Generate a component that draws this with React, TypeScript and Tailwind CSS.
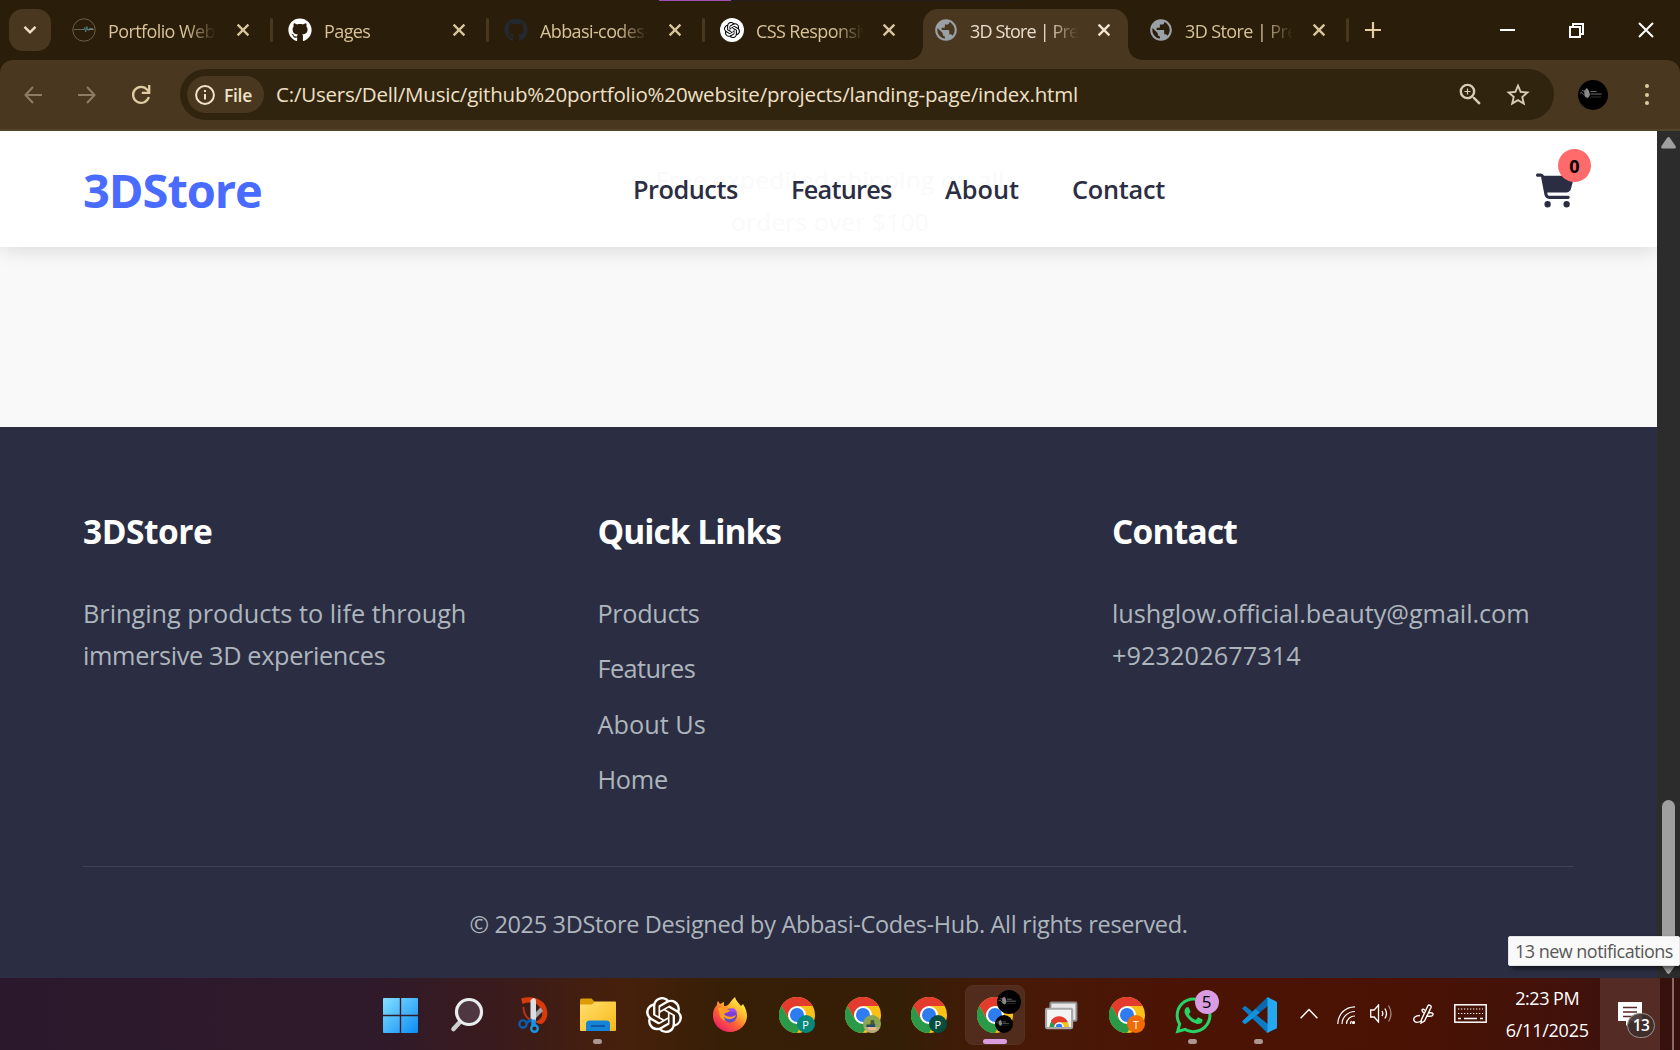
import type { ReactNode } from "react";
import { FaGithub, FaWhatsapp } from "react-icons/fa";
import { FaCartShopping } from "react-icons/fa6";
import { MdPublic, MdStarBorder, MdZoomIn } from "react-icons/md";
import { SiOpenai } from "react-icons/si";

/* ---------- Browser chrome ---------- */

function CloseGlyph() {
  return (
    <svg viewBox="0 0 14 14" className="size-[14px] shrink-0" fill="none" stroke="currentColor" strokeWidth="2.3">
      <path d="M1.6 1.6 12.4 12.4M12.4 1.6 1.6 12.4" />
    </svg>
  );
}

function PortfolioIcon() {
  return (
    <svg viewBox="0 0 24 24" className="size-6" fill="none">
      <circle cx="12" cy="12" r="11.2" stroke="#6b6047" strokeWidth="1" />
      <path d="M2 11.500h9M15 11.500h7" stroke="#5f6455" strokeWidth="1" />
      <path d="M10 11.500h2l.8-2 .8 4.500 1.200-5.500.8 3.500h2" stroke="#4f7f7b" strokeWidth="1" />
      <path d="M17 11h4" stroke="#7a9a94" strokeWidth="1.200" />
    </svg>
  );
}

function Tab({ icon, title, active, divider, className }: { icon: ReactNode; title: string; active?: boolean; divider?: boolean; className: string }) {
  return (
    <div className={`relative flex h-[60px] shrink-0 items-center ${className}`}>
      {active && (
        <div className="absolute left-[3px] right-[5px] top-[9px] bottom-0 rounded-t-[15px] bg-[#49381f]">
          <div className="absolute bottom-0 -left-[14px] size-[14px] bg-[radial-gradient(circle_at_0_0,transparent_13.5px,#49381f_14px)]" />
          <div className="absolute bottom-0 -right-[14px] size-[14px] bg-[radial-gradient(circle_at_100%_0,transparent_13.5px,#49381f_14px)]" />
        </div>
      )}
      <div className="relative flex size-6 shrink-0 items-center justify-center">{icon}</div>
      <div className={`relative ml-3 w-[111px] overflow-hidden whitespace-nowrap pt-[2px] text-[18px] leading-[26px] [mask-image:linear-gradient(to_right,#000_78px,transparent_108px)] ${active ? "tracking-[-0.85px] text-[#eadfcd]" : "tracking-[-0.6px] text-[#d8c29a]"}`}>
        {title}
      </div>
      <div className={`relative ml-auto mr-[22px] flex ${active ? "text-[#f2e6d2]" : "text-[#d9c69d]"}`}>
        <CloseGlyph />
      </div>
      {divider && <div className="absolute top-[18px] -right-px h-6 w-[3px] rounded-full bg-[#49381f]" />}
    </div>
  );
}

const globe = <MdPublic className="size-[26px] shrink-0 text-[#9aa0a6]" />;

function TabStrip() {
  return (
    <div className="relative flex h-[60px] bg-[#2a1d09]">
      <div className="absolute left-[659px] top-0 h-px w-[72px] bg-[#a04db6]" />
      <div className="absolute left-[731px] top-0 h-px w-[289px] bg-[#221c1a]" />
      <div className="mt-[9px] ml-[9px] mr-[5px] flex size-[42px] shrink-0 items-center justify-center rounded-[14px] bg-[#49381f]">
        <svg viewBox="0 0 14 10" className="h-[10px] w-[14px]" fill="none" stroke="#f0dfc4" strokeWidth="2.4">
          <path d="M1.5 1.8 7 7.4l5.500-5.600" />
        </svg>
      </div>
      <Tab className="w-[216px] pl-4" divider icon={<PortfolioIcon />} title="Portfolio Website" />
      <Tab className="w-[216px] pl-4" divider icon={<FaGithub className="size-6 text-white" />} title="Pages" />
      <Tab className="w-[216px] pl-4" divider icon={<FaGithub className="size-6 text-[#24292f]" />} title="Abbasi-codes-hub" />
      <Tab
        className="w-[214px] pl-4"
        icon={<span className="flex size-6 items-center justify-center rounded-full bg-white"><SiOpenai className="size-4 text-black" /></span>}
        title="CSS Responsive"
      />
      <Tab className="ml-[2px] w-[213px] pl-[14px]" active icon={globe} title="3D Store | Premium" />
      <Tab className="w-[215px] pl-4" divider icon={globe} title="3D Store | Premium" />
      <svg viewBox="0 0 16 16" className="mt-[22px] ml-[17px] size-4" stroke="#e6cda3" strokeWidth="2.2">
        <path d="M8 0v16M0 8h16" />
      </svg>
      <div className="ml-auto flex items-center gap-[54px] pr-[26px] text-white">
        <div className="h-[2px] w-[15px] bg-white" />
        <svg viewBox="0 0 15 15" className="size-[15px]" fill="none" stroke="currentColor" strokeWidth="2">
          <path d="M1 4h10v10H1zM4 4V1h10v10h-3" />
        </svg>
        <svg viewBox="0 0 16 16" className="size-4" stroke="currentColor" strokeWidth="2">
          <path d="M1 1l14 14M15 1 1 15" />
        </svg>
      </div>
    </div>
  );
}

function AvatarArt({ className }: { className: string }) {
  return (
    <svg viewBox="0 0 30 30" className={className} fill="none">
      <circle cx="15" cy="15" r="15" fill="#000" />
      <path d="M6 11l3-3 2 3 1 4-2 3-3-1z" fill="#8b8b8b" />
      <path d="M2 13c3-1 4 2 6 4M4 10c2 2 3 1 5 1" stroke="#777" strokeWidth="1" />
      <path d="M12.500 11.500h6M12.500 14h11" stroke="#6f6f6f" strokeWidth="1.200" />
      <path d="M12.500 17h11" stroke="#444" strokeWidth=".7" />
    </svg>
  );
}

function Toolbar() {
  return (
    <div className="bg-[#2a1d09]">
      <div className="flex h-[71px] items-center rounded-t-[13px] border-b-2 border-[#54442a] bg-[#49381f]">
        <svg viewBox="0 0 18 18" className="ml-6 size-[18px]" fill="none" stroke="#8e7d64" strokeWidth="2">
          <path d="M18 9H1.500M9 1 1.500 9 9 17" />
        </svg>
        <svg viewBox="0 0 18 18" className="ml-9 size-[18px]" fill="none" stroke="#8e7d64" strokeWidth="2">
          <path d="M0 9h16.500M9 1l7.500 8L9 17" />
        </svg>
        <svg viewBox="0 0 20 20" className="ml-[35px] size-5" fill="none" stroke="#dfcaa2" strokeWidth="2.300">
          <path d="M17.800 12A8 8 0 1 1 16.300 4.800L18 6.800" />
          <path d="M18.200 0v7.800h-7.400" />
        </svg>
        <div className="ml-[29px] flex h-[51px] w-[1374px] shrink-0 items-center rounded-full bg-[#31240f]">
          <div className="ml-[7px] flex h-[37px] w-[77px] shrink-0 items-center rounded-full bg-[#49381f] pl-2 text-[#f1e2c9]">
            <svg viewBox="0 0 20 20" className="size-5" fill="none" stroke="currentColor" strokeWidth="2">
              <circle cx="10" cy="10" r="8.900" />
              <path d="M10 9v5.600M10 5v2" />
            </svg>
            <span className="ml-[9px] text-[17.500px] font-semibold leading-[24px] tracking-[-0.3px]">File</span>
          </div>
          <span className="ml-[12px] pb-[2px] text-[20.500px] leading-[30px] tracking-[-0.205px] whitespace-nowrap text-[#efe0c6]">
            C:/Users/Dell/Music/github%20portfolio%20website/projects/landing-page/index.html
          </span>
          <MdZoomIn className="ml-auto size-[29px] text-[#d9cbb8]" />
          <MdStarBorder className="ml-[19px] mr-[22px] size-[28px] text-[#d9cbb8]" />
        </div>
        <AvatarArt className="ml-6 size-[30px]" />
        <div className="ml-[36.500px] flex flex-col gap-[4.500px]">
          <div className="size-1 rounded-full bg-[#dfcaa2]" />
          <div className="size-1 rounded-full bg-[#dfcaa2]" />
          <div className="size-1 rounded-full bg-[#dfcaa2]" />
        </div>
      </div>
    </div>
  );
}

/* ---------- Store page ---------- */

function StoreHeader() {
  return (
    <header className="relative z-10 flex h-[116px] shrink-0 items-center bg-white pl-[83px] shadow-[0_3px_20px_rgba(0,0,0,0.13)]">
      <div className="absolute left-[630px] top-[28px] w-[400px] text-center text-[24.500px] leading-[42px] tracking-[0.200px] text-[#fafafa]">
        Free expedited shipping on all orders over $100
      </div>
      <div className="relative w-[550px] pt-[2px] text-[47px] font-bold leading-none tracking-[-1.050px] text-[#4a6bff]">3DStore</div>
      <nav className="relative flex text-[25.300px] font-semibold leading-[40px] tracking-[-0.480px] text-[#2b2d42]">
        <a className="w-[158px]">Products</a>
        <a className="w-[154px] tracking-[-0.750px]">Features</a>
        <a className="w-[127px] tracking-[0px]">About</a>
        <a className="tracking-[-0.250px]">Contact</a>
      </nav>
      <div className="relative ml-auto mr-[83px] mt-[3px] h-[36px] w-[38px]">
        <FaCartShopping className="h-[35px] w-[38px] text-[#2b2d42]" />
        <div className="absolute -top-[24px] left-[22px] flex size-[33px] items-center justify-center rounded-full bg-[#ff6b6b] pt-px text-[18px] font-bold leading-none text-black">0</div>
      </div>
    </header>
  );
}

function StoreFooter() {
  return (
    <footer className="h-[551px] shrink-0 bg-[#2b2d42] px-[83px] pt-[78px] text-[25.300px] leading-[41.700px] text-[#adb5bd]">
      <div className="grid h-[361px] grid-cols-[462px_462px_462px] gap-[52.500px]">
        <div>
          <h3 className="h-[88px] pt-px text-[33.500px] font-bold leading-[50px] tracking-[-0.500px] text-white">3DStore</h3>
          <p className="tracking-[-0.020px]">Bringing products to life through</p>
          <p className="tracking-[-0.360px]">immersive 3D experiences</p>
        </div>
        <div>
          <h3 className="h-[88px] pt-px text-[33.500px] font-bold leading-[50px] tracking-[-0.980px] text-white">Quick Links</h3>
          <ul className="flex flex-col gap-[13.600px]">
            <li className="tracking-[-0.370px]">Products</li>
            <li className="tracking-[-0.600px]">Features</li>
            <li className="tracking-[0px]">About Us</li>
            <li className="tracking-[-0.300px]">Home</li>
          </ul>
        </div>
        <div>
          <h3 className="h-[88px] pt-px text-[33.500px] font-bold leading-[50px] tracking-[-0.800px] text-white">Contact</h3>
          <p className="tracking-[-0.080px]">lushglow.official.beauty@gmail.com</p>
          <p className="tracking-[0.060px]">+923202677314</p>
        </div>
      </div>
      <div className="border-t border-[#404255] pt-[37px] text-center text-[23.500px] tracking-[-0.325px]">
        © 2025 3DStore Designed by Abbasi-Codes-Hub. All rights reserved.
      </div>
    </footer>
  );
}

function Scrollbar() {
  return (
    <div className="flex w-[23px] flex-col items-center bg-[#2c2c2c] pt-[6px]">
      <svg viewBox="0 0 15 12" className="h-3 w-[15px] shrink-0" fill="#9f9f9f">
        <path d="M6 1Q7.500-.8 9 1l5.500 8Q15.500 11.500 13.500 11.500h-12Q-.5 11.500 .5 9z" />
      </svg>
      <div className="mt-[651px] h-[158px] w-[13px] shrink-0 rounded-full bg-[#9f9f9f]" />
      <svg viewBox="0 0 15 12" className="mt-1 h-3 w-[15px] shrink-0" fill="#9f9f9f">
        <path d="M6 11Q7.500 12.800 9 11l5.500-8Q15.500 .5 13.500 .5h-12Q-.5 .5 .5 3z" />
      </svg>
    </div>
  );
}

/* ---------- Taskbar ---------- */

function ChromeIcon() {
  return (
    <svg viewBox="0 0 36 36" className="size-9">
      <circle cx="18" cy="18" r="18" fill="#fbc116" />
      <path d="M18 9h15.600A18 18 0 0 0 2.400 9L10.200 22.500z" fill="#e33b2e" />
      <path d="M2.400 9A18 18 0 0 0 18 36L25.800 22.500 18 18 10.200 22.500z" fill="#2a9a48" />
      <circle cx="18" cy="18" r="9" fill="#fff" />
      <circle cx="18" cy="18" r="7" fill="#2f7cf0" />
    </svg>
  );
}

function ChromeBadge({ className, children }: { className: string; children?: ReactNode }) {
  return (
    <div className="relative">
      <ChromeIcon />
      <div className={`absolute top-[18px] left-[18px] flex size-[18px] items-center justify-center overflow-hidden rounded-full text-[11px] font-medium leading-none text-white ${className}`}>{children}</div>
    </div>
  );
}

function StartIcon() {
  return (
    <svg viewBox="0 0 35 35" className="size-[35px]">
      <defs>
        <linearGradient id="win" x1="0" y1="0" x2="1" y2="1">
          <stop offset="0" stopColor="#86e0ff" />
          <stop offset="1" stopColor="#0a8cf5" />
        </linearGradient>
      </defs>
      <path fill="url(#win)" d="M1 0h15.800v16.800H0V1a1 1 0 0 1 1-1zM18.200 0H34a1 1 0 0 1 1 1v15.800H18.200zM0 18.200h16.800V35H1a1 1 0 0 1-1-1zM18.200 18.200H35V34a1 1 0 0 1-1 1H18.200z" />
    </svg>
  );
}

function SearchIcon() {
  return (
    <svg viewBox="0 0 34 36" className="h-9 w-[34px]" fill="none">
      <path d="M10 25 3.500 32" stroke="#cfcfcf" strokeWidth="4.600" strokeLinecap="round" />
      <circle cx="19" cy="15" r="12.500" fill="#4d3842" stroke="#e9eded" strokeWidth="3.200" />
    </svg>
  );
}

/* Scissors over a red loop */
function SnipIcon() {
  return (
    <svg viewBox="0 0 32 36" className="h-9 w-8" fill="none">
      <path d="M5.500 10c0 6 2.500 10.500 7 13" stroke="#b9341a" strokeWidth="1.800" />
      <path d="M3 1.500C12-1.500 22 1 26.500 7c5 8 3 17-3 20-3 0-5-1-7-2.500 8-1 9-8 6.500-12.500C19.500 5.500 12 4 4.500 7z" fill="#d63a0d" />
      <path d="M22.500 10.500 25 14 16 23l-2-4z" fill="#a3a6a8" />
      <path d="M12.500 3.500Q14 .8 16 1q2 .5 2 3v20h-5.500z" fill="#dcdfe2" />
      <circle cx="5" cy="27" r="3.600" stroke="#0c5cab" strokeWidth="2.400" />
      <circle cx="16.500" cy="31.500" r="3.300" stroke="#1796e6" strokeWidth="2.400" />
      <path d="M8 26 14 22.500" stroke="#0c5cab" strokeWidth="3" />
      <path d="M15.500 22.500v6" stroke="#1796e6" strokeWidth="4.500" />
    </svg>
  );
}

function FolderIcon() {
  return (
    <svg viewBox="0 0 36 34" className="h-[34px] w-9">
      <defs>
        <linearGradient id="folder" x1="0" y1="0" x2="1" y2="1">
          <stop offset="0" stopColor="#ffdf6e" />
          <stop offset="1" stopColor="#f8b917" />
        </linearGradient>
      </defs>
      <path d="M0 2a1.500 1.500 0 0 1 1.500-1.500h10L15 4v5H0z" fill="#dd9c08" />
      <path d="M0 6.500h12l3-3h20a1 1 0 0 1 1 1V32a1 1 0 0 1-1 1H1a1 1 0 0 1-1-1z" fill="url(#folder)" />
      <path d="M6 33v-7a3.500 3.500 0 0 1 3.500-3.500h17A3.500 3.500 0 0 1 30 26v7z" fill="#1583d6" />
      <path d="M11 28h14" stroke="#0b4d94" strokeWidth="1.600" />
    </svg>
  );
}

function FirefoxIcon() {
  return (
    <svg viewBox="0 0 34 36" className="h-9 w-[34px]">
      <defs>
        <linearGradient id="fox" x1=".85" y1=".1" x2=".2" y2=".95">
          <stop offset="0" stopColor="#fff04a" />
          <stop offset=".35" stopColor="#ffb02a" />
          <stop offset=".6" stopColor="#ff6534" />
          <stop offset="1" stopColor="#ef1d66" />
        </linearGradient>
      </defs>
      <path d="M22 0c1 4 3 5 6 9l2-2c3 4 4 9 4 12a17 16 0 0 1-34 0C0 13 2 10 4 8c0-1 0-3 1-4l2 3 4-2 0 4c5 1 6-5 11-9z" fill="url(#fox)" />
      <circle cx="17" cy="18.500" r="7" fill="#7c3fd6" />
      <path d="M5 11c4-1 6-1 8 1l4 1c-1 3-4 2-6 4 2 3 8 4 12 1-2 8-12 8-16 2z" fill="#ff9c28" />
      <path d="M11 20c3 3 9 3 12-1 0 3-3 7-6 6.500S11 23 11 20z" fill="#5a50c8" />
      <path d="M17 12c4-2 7 1 7 5-2-3-4-3-7-2z" fill="#a04ff0" />
    </svg>
  );
}

function RemoteIcon() {
  return (
    <svg viewBox="0 0 34 30" className="mt-px h-[29px] w-[34px]">
      <rect x="6" y="1.500" width="27" height="19" rx="1" fill="#e7e7e7" stroke="#8b8b8b" strokeWidth="2" />
      <rect x="1.500" y="8" width="27" height="20" rx="1" fill="#f4f4f4" stroke="#a7a7a7" strokeWidth="2.200" />
      <path d="M5 27a10 10 0 0 1 20 0z" fill="#279b49" />
      <path d="M6.500 20.500a10 10 0 0 1 17 0L24 22h-9l-4 4z" fill="#e33b2e" />
      <path d="M16 22h8.200a10 10 0 0 1 .8 5h-8z" fill="#fbc116" />
      <path d="M10 27a5 5 0 0 1 10 0z" fill="#fff" />
      <path d="M11.500 27a3.500 3.500 0 0 1 7 0z" fill="#2f7cf0" />
    </svg>
  );
}

function CodeIcon() {
  return (
    <svg viewBox="0 0 36 36" className="size-9">
      <path d="M1 11.500 3 9.500a1.500 1.500 0 0 1 2 0L28 28v7.500L25.500 35z" fill="#0a7bc4" />
      <path d="M1 24.500 3 26.500a1.500 1.500 0 0 0 2 0L28 8V.5L25.500 1z" fill="#0b68ad" />
      <path d="M1 24.500 3 26.500a1.500 1.500 0 0 0 2 0L19 15.500 14.500 12z" fill="#1291dc" />
      <path d="M25.500 35.500a2 2 0 0 0 1.500 0L34.500 32a2 2 0 0 0 1.500-2V6a2 2 0 0 0-1.500-2L27 .5a2 2 0 0 0-1.500.2L26.500 2v32z" fill="#25a8f0" />
    </svg>
  );
}

function AppSlot({ children, running, focused }: { children: ReactNode; running?: boolean; focused?: boolean }) {
  return (
    <div className={`relative flex h-[60px] w-[60px] shrink-0 items-center justify-center rounded-lg ${focused ? "border border-[#57311f] bg-[#512c1d]" : ""}`}>
      {children}
      {running && <div className="absolute bottom-px left-[25px] h-[5px] w-[9px] rounded-full bg-[#ab9691]" />}
      {focused && <div className="absolute bottom-0 left-[17px] h-[5px] w-6 rounded-full bg-[#da9ee0]" />}
    </div>
  );
}

function TrayIcons() {
  return (
    <div className="flex items-center pb-[2px] text-white">
      <svg viewBox="0 0 18 11" className="h-[11px] w-[18px]" fill="none" stroke="currentColor" strokeWidth="1.500">
        <path d="M.6 10.200 9 1.500l8.400 8.700" />
      </svg>
      <svg viewBox="0 0 18 18" className="mt-[3px] ml-[19px] size-[18px]" fill="none" stroke="currentColor" strokeWidth="1.200">
        <path d="M.8 18C1 8 8 1 18 .8M5 18C5 11 11 5.500 18 5.500M9.500 18c0-4.500 4-8 8.500-8" />
        <path d="M13.500 18q0-1.800 1-3" />
        <circle cx="16.500" cy="16.500" r="1.600" fill="currentColor" stroke="none" />
      </svg>
      <svg viewBox="0 0 23 19" className="mt-px ml-[15px] h-[19px] w-[23px]" fill="none" stroke="currentColor" strokeWidth="1.300">
        <path d="M.7 6v7h3.500L8.500 18V1L4.200 6zM12 7q1.700 2.500 0 5M14.800 4.500q3.400 5 0 10" />
        <path d="M18.500 1.500q5 8 0 16" opacity=".5" />
      </svg>
      <svg viewBox="0 0 21 20" className="mt-px ml-[20px] h-5 w-[21px]" fill="none" stroke="currentColor" strokeWidth="1.400">
        <path d="M8.500 15.500 14.800 2c.9-1.800 4-.6 3.200 1.500L11.500 17 8 19z" />
        <path d="M11.500 9.200C8 7.500 8.500 4.500 11 5.500l1.500 1M7 11.500c-4.500 0-7 2.500-6 5s4.500 2.200 7 .5M16 9c3.500-1 5 1 3.500 2.500-1.500 1.400-3.500.5-6 .8" />
      </svg>
      <svg viewBox="0 0 33 19" className="mt-px ml-[20px] h-[19px] w-[33px]" fill="none" stroke="currentColor" strokeWidth="1.500">
        <rect x=".8" y=".8" width="31.400" height="17.400" />
        <path d="M4 5h25M4 9.500h25" strokeWidth="1.200" strokeDasharray="1.300 1.700" />
        <path d="M4 14.500h3M10 14.500h13M26 14.500h3" />
      </svg>
    </div>
  );
}

function Taskbar() {
  return (
    <div className="relative flex h-[72px] shrink-0 items-center bg-[linear-gradient(90deg,#2c182c_0px,#2f1a2b_370px,#3a1b1c_500px,#47200b_620px,#371f06_720px,#351e06_900px,#481907_1020px,#4b1303_1200px,#4a1203_1400px,#42120b_1560px,#35100d_1680px)]">
      <div className="ml-[370px] flex gap-[6.100px] pt-[2px]">
        <AppSlot><StartIcon /></AppSlot>
        <AppSlot><div className="pl-[2px]"><SearchIcon /></div></AppSlot>
        <AppSlot><div className="pl-[4px]"><SnipIcon /></div></AppSlot>
        <AppSlot running><FolderIcon /></AppSlot>
        <AppSlot><SiOpenai className="size-[36px] text-white" /></AppSlot>
        <AppSlot><FirefoxIcon /></AppSlot>
        <AppSlot><ChromeBadge className="bg-[#07877a]">P</ChromeBadge></AppSlot>
        <AppSlot>
          <ChromeBadge className="">
            <svg viewBox="0 0 18 18" className="size-[18px]">
              <rect width="18" height="18" fill="#8aa653" />
              <path d="M0 12h18v6H0z" fill="#b5a97e" />
              <path d="M8 5h3l1 6H7z" fill="#4c5a2c" />
              <path d="M4 10h9v5H6z" fill="#e8b98a" />
              <path d="M3.500 9.500h9v2.500h-9z" fill="#234a68" />
            </svg>
          </ChromeBadge>
        </AppSlot>
        <AppSlot><ChromeBadge className="bg-[#064d40]">P</ChromeBadge></AppSlot>
        <AppSlot focused>
          <div className="relative">
            <ChromeIcon />
            <AvatarArt className="absolute -top-[7px] left-[20px] size-6" />
            <AvatarArt className="absolute top-[18px] left-[18px] size-[18px]" />
          </div>
        </AppSlot>
        <AppSlot><RemoteIcon /></AppSlot>
        <AppSlot><ChromeBadge className="bg-[#f26b05]">T</ChromeBadge></AppSlot>
        <AppSlot running>
          <div className="relative">
            <FaWhatsapp className="size-[41px] text-[#25d366]" />
            <div className="absolute -top-[5px] left-[22px] flex size-6 items-center justify-center rounded-full bg-[#d99ce2] text-[17px] leading-none text-black">5</div>
          </div>
        </AppSlot>
        <AppSlot running><CodeIcon /></AppSlot>
      </div>
      <div className="ml-[11px]"><TrayIcons /></div>
      <div className="ml-[12px] w-[96px] text-center text-[18px] leading-8 text-white">
        <div className="tracking-[-0.500px]">2:23 PM</div>
        <div className="tracking-[-0.250px]">6/11/2025</div>
      </div>
      <div className="absolute left-[1600px] top-0 h-full w-[60px] bg-[#552b26]">
        <svg viewBox="0 0 24 24" className="absolute left-[18px] top-6 size-6">
          <path d="M0 0h24v19H13l-5 5v-5H0z" fill="#fff" />
          <path d="M5 5.500h14M5 10h14M5 14.500h9" stroke="#552b26" strokeWidth="1.500" />
        </svg>
        <div className="absolute left-[27px] top-[35px] flex h-[25px] w-[28px] items-center justify-center rounded-full border border-[#a09391] bg-[#3d2f2e]/90 text-[15.500px] font-semibold leading-none tracking-[-0.500px] text-white">13</div>
      </div>
      <div className="absolute left-[1672px] top-0 h-full w-[2px] bg-[#8a6a66]" />
    </div>
  );
}

export default function App() {
  return (
    <div className="relative flex h-[1050px] w-[1680px] flex-col overflow-hidden font-['Open_Sans','Noto_Sans',sans-serif]">
      <TabStrip />
      <Toolbar />
      <div className="flex h-[847px]">
        <main className="flex w-[1657px] flex-col overflow-hidden bg-[#f9f9f9]">
          <StoreHeader />
          <div className="h-[180px] shrink-0" />
          <StoreFooter />
        </main>
        <Scrollbar />
      </div>
      <Taskbar />
      <div className="absolute left-[1508px] top-[936px] flex h-[30px] w-[172px] items-center rounded-[2px] border border-[#e4e4e4] bg-[#f9f9f9] pl-[6px] text-[18px] leading-none tracking-[-0.530px] whitespace-nowrap text-[#575757] shadow-[3px_3px_4px_rgba(0,0,0,0.5)]">
        13 new notifications
      </div>
    </div>
  );
}
